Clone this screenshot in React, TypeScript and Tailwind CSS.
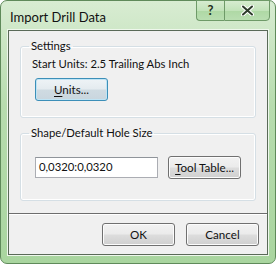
import React from "react";

const font = { fontFamily: 'Lato, "Noto Sans", sans-serif' };

function WinButton({ label, ul, focused }: { label: string; ul: string; focused?: boolean }) {
  const rest = label.slice(ul.length);
  return (
    <button
      className={`h-[23px] w-[73px] rounded-[3px] border text-[11.6px] text-[#111] ${
        focused
          ? "border-[#3c8fb8] bg-[linear-gradient(#eef3f6_0%,#e4ebef_48%,#cfdbe2_52%,#c9d6de_100%)] shadow-[inset_0_0_0_1px_#bfe4f5]"
          : "border-[#707070] bg-[linear-gradient(#f2f2f2_0%,#ebebeb_48%,#dddddd_52%,#cfcfcf_100%)] shadow-[inset_0_0_0_1px_#fcfcfc]"
      }`}
    >
      {ul && <span className="underline underline-offset-2">{ul}</span>}
      {rest}
    </button>
  );
}

export default function App() {
  return (
    <div className="w-[276px] h-[264px] bg-white" style={font}>
      <div className="flex h-full w-full flex-col rounded-[7px] border border-[#5f8a5a] bg-[linear-gradient(180deg,#d8ecd2_0%,#b7dcae_40%,#a9d59f_100%)] px-[7px] pb-[8px]">
        {/* TITLE BAR */}
        <div className="flex h-[29px] shrink-0 items-start">
          <p className="mt-[7px] ml-[2px] text-[13px] text-[#111]">Import Drill Data</p>
          <div className="ml-auto mr-[-2px] flex h-[21px] mt-[-1px]">
            <div className="flex w-[28px] items-center justify-center rounded-bl-[4px] border border-r-0 border-[#6e9a68] bg-[linear-gradient(#d6ecd0_0%,#c2e3ba_50%,#aed8a4_51%,#b9deb1_100%)] text-[13px] font-bold text-[#1f2f1d]">
              ?
            </div>
            <div className="flex w-[46px] items-center justify-center rounded-br-[4px] border border-[#6e9a68] bg-[linear-gradient(#d6ecd0_0%,#c2e3ba_50%,#aed8a4_51%,#b9deb1_100%)]">
              <svg width="13" height="11" viewBox="0 0 13 11">
                <path d="M2 1.5 L11 9.5 M11 1.5 L2 9.5" stroke="#ffffff" strokeWidth="4" strokeLinecap="round" />
                <path d="M2 1.5 L11 9.5 M11 1.5 L2 9.5" stroke="#2e3d2c" strokeWidth="2" strokeLinecap="round" />
              </svg>
            </div>
          </div>
        </div>

        {/* CLIENT AREA */}
        <div className="flex flex-1 flex-col border border-[#5a6a58] bg-[#f0f0f0] shadow-[0_0_0_1px_#eef7ec] text-[11.3px] text-[#111]">
          <fieldset className="mx-[11px] mt-[7px] h-[80px] rounded-[3px] border border-[#d5dfe5] pl-[8px] shadow-[inset_0_0_0_1px_#ffffff]">
            <legend className="px-[2px] leading-[16px]">Settings</legend>
            <p className="mt-[2px] ml-[3px] leading-[16px]">Start Units: 2.5 Trailing Abs Inch</p>
            <div className="mt-[6px] ml-[6px]">
              <WinButton label="Units..." ul="U" focused />
            </div>
          </fieldset>

          <fieldset className="mx-[11px] mt-[7px] h-[76px] rounded-[3px] border border-[#d5dfe5] pl-[8px] shadow-[inset_0_0_0_1px_#ffffff]">
            <legend className="px-[2px] leading-[16px]">Shape/Default Hole Size</legend>
            <div className="mt-[15px] ml-[6px] flex items-center gap-[10px]">
              <div className="flex h-[21px] w-[123px] items-center border border-[#abadb3] border-t-[#8f949a] bg-white pl-[3px]">
                0,0320:0,0320
              </div>
              <WinButton label="Tool Table..." ul="T" />
            </div>
          </fieldset>

          <div className="mt-auto border-t border-[#6d6d6d] shadow-[inset_0_1px_0_#ffffff] flex justify-end gap-[11px] px-[8px] pt-[9px] pb-[8px]">
            <WinButton label="OK" ul="" />
            <WinButton label="Cancel" ul="" />
          </div>
        </div>
      </div>
    </div>
  );
}
